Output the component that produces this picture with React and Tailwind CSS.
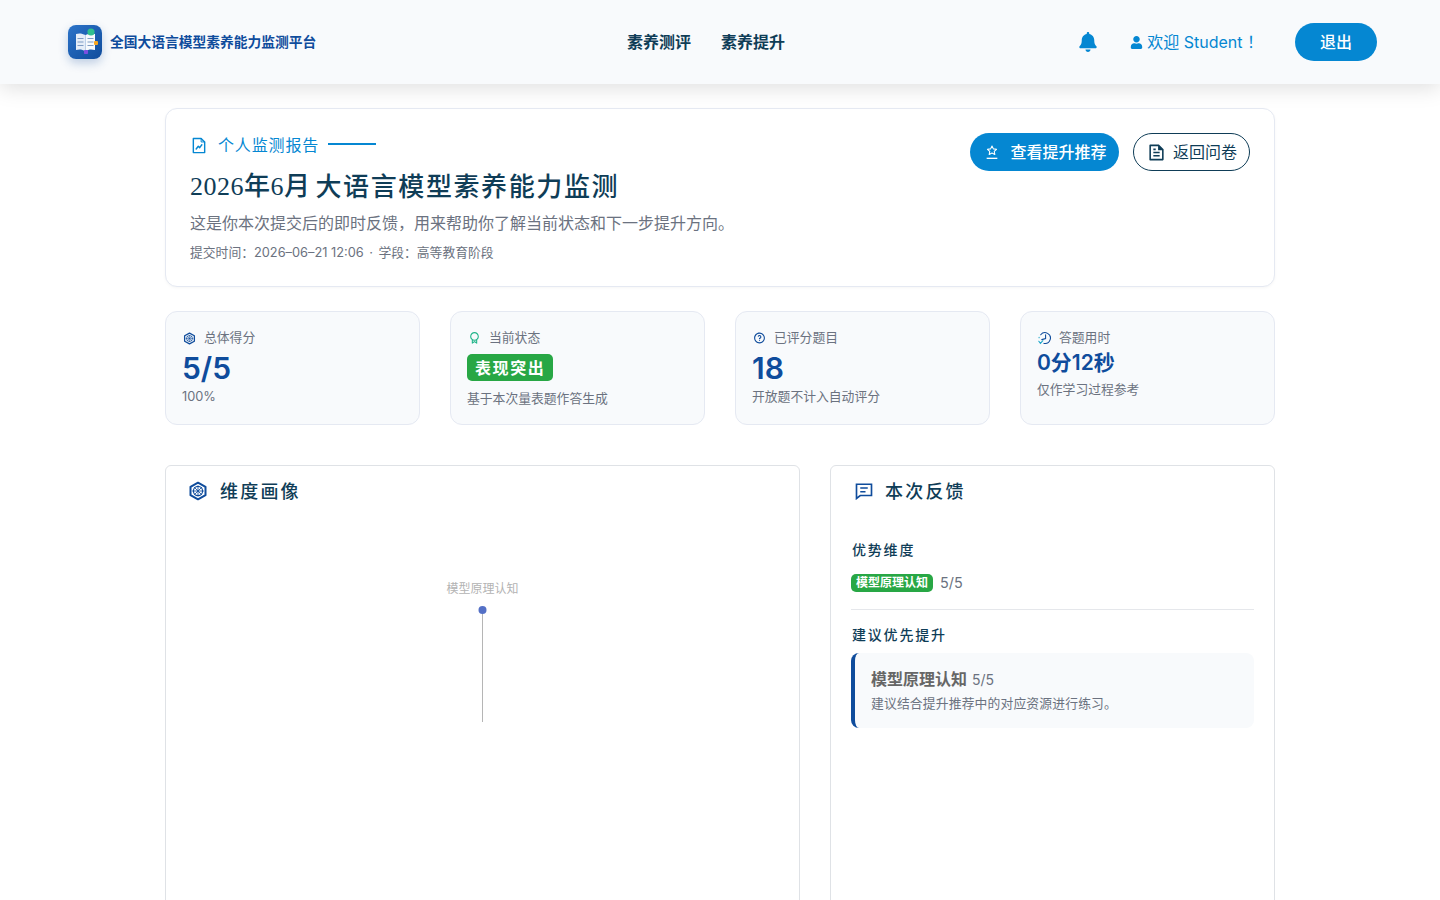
import React from 'react';
import { FaBell, FaUser } from 'react-icons/fa';
import { RiFileTextLine, RiAwardLine, RiQuestionLine } from 'react-icons/ri';

const HexIcon = ({ className }) => (
  <svg viewBox="0 0 24 24" className={className} fill="none" stroke="currentColor">
    <path d="M12 2 21 7v10l-9 5-9-5V7z" strokeWidth="2.4" strokeLinejoin="round" />
    <circle cx="12" cy="12" r="5.5" strokeWidth="1.4" />
    <path d="M5 12h14M12 5.5v13M7.5 7.5l9 9M16.5 7.5l-9 9" strokeWidth="1" />
  </svg>
);

const StarLine = ({ className }) => (
  <svg viewBox="0 0 24 24" className={className} fill="none" stroke="currentColor" strokeWidth="2" strokeLinejoin="round">
    <path d="m12 2.5 2.6 5.4 5.9.8-4.3 4 1.1 5.8L12 15.7l-5.3 2.8 1.1-5.8-4.3-4 5.9-.8z" transform="translate(2.4 1) scale(.8)" />
    <path d="M4 21.5h16" />
  </svg>
);

const TimeIcon = ({ className }) => (
  <svg viewBox="0 0 24 24" className={className} fill="none" strokeWidth="2" strokeLinecap="round">
    <path d="M5 6a10 10 0 1 1 6 16" stroke="#0f4c9c" />
    <path d="M14 6v7l-7 2" stroke="#0f4c9c" />
    <path d="M1.5 18l3 4 4.5-5" stroke="#1aa6c9" />
    <path d="M2 10.5v1" stroke="#1aa6c9" />
  </svg>
);

const ReportIcon = ({ className }) => (
  <svg viewBox="0 0 24 24" className={className} fill="none" stroke="currentColor" strokeWidth="2" strokeLinejoin="round" strokeLinecap="round">
    <path d="M4 2h11l5 5v15H4z" />
    <path d="M15 2v5h5" strokeWidth="1.4" />
    <path d="M8 17l3-4 2 2 3-4" />
  </svg>
);

const ChatIcon = ({ className }) => (
  <svg viewBox="0 0 24 24" className={className} fill="none" stroke="currentColor" strokeWidth="2.2">
    <path d="M2 3h20v15H7l-5 4z" strokeLinejoin="miter" />
    <path d="M7 8h10M7 13h7" />
  </svg>
);

const Logo = () => (
  <div className="flex h-[34px] w-[34px] items-center justify-center rounded-lg bg-gradient-to-br from-[#2b73c9] to-[#0f4c9c] shadow-[0_4px_10px_rgba(15,76,156,0.25)]">
    <svg viewBox="0 0 34 34" className="h-[34px] w-[34px]">
      <path d="M8 9c3-1 6-.8 9.500 1v16c-3.500-1.800-6.500-2-9.500-1z" fill="#e6eef8" />
      <path d="M17.500 10c3-1.800 6-2 9.500-1v16c-3.500-1-6.500-.8-9.500 1z" fill="#f7fafd" />
      <path d="M9.500 13.500h6M9.500 17h6M9.500 20.500h6M19.500 13.500h6M19.500 17h6M19.500 20.500h6" stroke="#7f9cc4" strokeWidth="1.100" />
      <circle cx="23" cy="7" r="3.600" fill="#2fbf8f" />
      <rect x="26" y="16" width="4" height="4" rx="1" fill="#f5a623" />
      <rect x="16" y="25" width="4" height="4" rx=".8" fill="#7c4fe0" />
    </svg>
  </div>
);

const stats = [
  { label: '总体得分', icon: <HexIcon className="h-[13px] w-[13px] text-[#0f4c9c]" />, value: '5/5', sub: '100%' },
  { label: '当前状态', icon: <RiAwardLine className="h-[16px] w-[16px] text-[#22b58a]" />, badge: '表现突出', sub: '基于本次量表题作答生成' },
  { label: '已评分题目', icon: <RiQuestionLine className="h-[16px] w-[16px] text-[#0f4c9c]" />, value: '18', sub: '开放题不计入自动评分' },
  { label: '答题用时', icon: <TimeIcon className="h-[14px] w-[14px]" />, value: '0分12秒', small: true, sub: '仅作学习过程参考' },
];

function StatCard({ item }) {
  return (
    <div className="h-[114px] rounded-xl border border-[#e5e9f2] bg-[#f8fafc] px-4 pt-[17px]">
      <div className="flex h-[18px] items-center gap-2 pl-[1px] text-[12.8px] text-[#6b7280]">
        <span className="flex w-[13px] justify-center">{item.icon}</span>
        <span>{item.label}</span>
      </div>
      {item.badge && (
        <div className="mt-[7px] inline-block h-[27px] rounded-[5px] bg-[#28a745] px-2 text-[16px] leading-[28px] font-bold tracking-[1.6px] text-white">
          {item.badge}
        </div>
      )}
      {item.value && !item.small && (
        <div className="mt-[3px] h-[36px] text-[30px] leading-[36px] font-semibold text-[#0f4c9c]">{item.value}</div>
      )}
      {item.small && (
        <div className="mt-[2px] h-[28px] text-[21px] leading-[28px] font-semibold text-[#0f4c9c]">{item.value}</div>
      )}
      <div className={`text-[12.8px] text-[#6b7280] ${item.badge ? 'mt-[8px]' : item.small ? 'mt-[3px]' : 'mt-[1px]'}`}>{item.sub}</div>
    </div>
  );
}

export default function App() {
  return (
    <div className="h-[900px] overflow-hidden bg-white font-['Inter','Noto_Sans_CJK_SC',sans-serif] text-[#1f2937]">
      {/* header */}
      <header className="flex h-[84px] items-center bg-[#f8fafc] pr-[63px] pl-[68px] shadow-[0_4px_20px_rgba(0,0,0,0.13)]">
        <div className="flex w-[248px] items-center gap-2">
          <Logo />
          <span className="text-[13.75px] font-semibold whitespace-nowrap text-[#0f4c9c]">全国大语言模型素养能力监测平台</span>
        </div>
        <nav className="ml-[311px] flex gap-[30px] text-[16px] font-semibold text-[#0f3d57]">
          <span>素养测评</span>
          <span>素养提升</span>
        </nav>
        <div className="ml-auto flex items-center text-[#0587d2]">
          <FaBell className="h-[20px] w-[20px]" />
          <div className="ml-[32px] flex items-center gap-[4px] text-[16px]">
            <FaUser className="h-[13px] w-[13px]" />
            <span>欢迎 Student ！</span>
          </div>
          <button className="ml-[32px] h-[38px] w-[82px] rounded-full bg-[#0587d2] text-[16px] font-medium text-white">退出</button>
        </div>
      </header>

      <main className="mx-auto w-[1110px] pt-6">
        {/* hero */}
        <section className="flex h-[179px] justify-between rounded-xl border border-[#e5e9f2] bg-white pt-[24px] pr-[24px] pl-[24px] shadow-[0_1px_3px_rgba(0,0,0,0.04)]">
          <div>
            <div className="flex h-[24px] items-center text-[16px] tracking-[0.85px] text-[#0587d2]">
              <ReportIcon className="mr-[10px] h-[17px] w-[18px]" />
              <span>个人监测报告</span>
              <span className="mb-[2px] ml-[9px] h-[2px] w-[48px] bg-[#0587d2]" />
            </div>
            <h1 className="mt-[9px] flex h-[41px] gap-[5px] text-[26px] leading-[42px] font-medium text-[#0f3d57]">
              <span className="font-['Liberation_Serif','Noto_Sans_CJK_SC',serif] tracking-[0.5px]">2026年6月</span>
              <span className="tracking-[1.6px]">大语言模型素养能力监测</span>
            </h1>
            <p className="mt-[4px] h-[24px] text-[16px] leading-[24px] text-[#6b7280]">这是你本次提交后的即时反馈，用来帮助你了解当前状态和下一步提升方向。</p>
            <p className="mt-[8px] text-[12.8px] leading-[20px] text-[#6b7280]">
              提交时间：2026–06–21 12:06<span className="mx-[5.5px]">·</span>学段：高等教育阶段
            </p>
          </div>
          <div className="flex h-[38px] gap-[14px]">
            <button className="flex w-[149px] items-center justify-center gap-[10px] rounded-full bg-[#0587d2] pl-[2px] text-[16px] font-medium text-white">
              <StarLine className="h-[16px] w-[16px]" />
              查看提升推荐
            </button>
            <button className="flex w-[117px] items-center justify-center gap-[7px] rounded-full border border-[#0f3d57] pl-[1px] text-[16px] text-[#0f3d57]">
              <RiFileTextLine className="h-[19px] w-[19px]" />
              返回问卷
            </button>
          </div>
        </section>

        {/* stat cards */}
        <section className="mt-6 grid grid-cols-4 gap-[30px]">
          {stats.map((item) => (
            <StatCard key={item.label} item={item} />
          ))}
        </section>

        {/* panels */}
        <section className="mt-10 flex gap-[30px]">
          <div className="h-[520px] w-[635px] rounded-t-md border border-[#dfe2e6] bg-white">
            <div className="flex h-[50px] items-center gap-[12px] pl-[22px] text-[18px] font-medium tracking-[2.2px] text-[#0f3d57]">
              <HexIcon className="h-[20px] w-[20px] text-[#0f4c9c]" />
              <span>维度画像</span>
            </div>
            <svg viewBox="0 0 633 220" className="block h-[220px] w-[633px]">
              <text x="316.5" y="77" textAnchor="middle" fontSize="12" fill="#b3b3b3">模型原理认知</text>
              <line x1="316.5" y1="94" x2="316.5" y2="206" stroke="#b5b5b5" strokeWidth="1" />
              <circle cx="316.5" cy="94" r="4" fill="#5470c6" />
            </svg>
          </div>

          <div className="h-[520px] w-[445px] rounded-t-md border border-[#dfe2e6] bg-white">
            <div className="flex h-[50px] items-center gap-[12px] pl-[24px] text-[18px] font-medium tracking-[2.2px] text-[#0f3d57]">
              <ChatIcon className="h-[18px] w-[18px] text-[#0f4c9c]" />
              <span>本次反馈</span>
            </div>
            <div className="px-5 pt-[24px]">
              <h3 className="h-[20px] pl-[1px] text-[14px] leading-[20px] font-medium tracking-[1.8px] text-[#0f3d57]">优势维度</h3>
              <div className="mt-[13px] flex h-[20px] items-center gap-[7px]">
                <span className="rounded-[5px] bg-[#28a745] px-[5px] text-[12px] leading-[18px] font-bold text-white">模型原理认知</span>
                <span className="text-[14.4px] text-[#6b7280]">5/5</span>
              </div>
              <div className="mt-[16px] border-t border-[#e5e7eb]" />
              <h3 className="mt-[15px] h-[20px] pl-[1px] text-[14px] leading-[20px] font-medium tracking-[1.8px] text-[#0f3d57]">建议优先提升</h3>
              <div className="mt-[8px] h-[75px] rounded-lg border-l-[4px] border-[#0f4c9c] bg-[#f8fafc] pt-[16px] pl-[16px]">
                <div className="flex h-[20px] items-center gap-[5px]">
                  <span className="text-[16px] font-semibold text-[#666666]">模型原理认知</span>
                  <span className="text-[14px] text-[#6b7280]">5/5</span>
                </div>
                <p className="mt-[6px] text-[12.8px] leading-[18px] tracking-[0.15px] text-[#6b7280]">建议结合提升推荐中的对应资源进行练习。</p>
              </div>
            </div>
          </div>
        </section>
      </main>
    </div>
  );
}
